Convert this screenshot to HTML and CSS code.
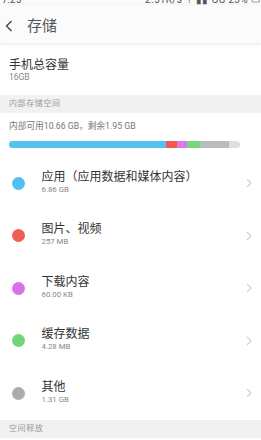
FILE: index.html
```html
<!DOCTYPE html>
<html lang="zh-CN">
<head>
<meta charset="utf-8">
<title>存储</title>
<link rel="stylesheet" href="styles.css">
</head>
<body>
<div class="status">
  <span class="time">7:25</span>
  <span class="right">2.51K/s ⇡ ▮▮ GG 23% ▭</span>
</div>
<header class="topbar">
  <svg class="back" width="8" height="12" viewBox="0 0 8 12"><path d="M6.5 1 L1.5 6 L6.5 11" fill="none" stroke="#444" stroke-width="1.4"/></svg>
  <h1 class="page-title">存储</h1>
</header>
<section class="total">
  <div class="total-title">手机总容量</div>
  <div class="total-sub">16GB</div>
</section>
<div class="band">内部存储空间</div>
<section class="usage">
  <div class="usage-text">内部可用10.66 GB，剩余1.95 GB</div>
  <div class="bar">
    <span class="seg seg-blue" style="width:67.8%"></span>
    <span class="seg seg-red" style="width:4.8%"></span>
    <span class="seg seg-pink" style="width:4.6%"></span>
    <span class="seg seg-green" style="width:5.5%"></span>
    <span class="seg seg-gray" style="width:12.5%"></span>
  </div>
</section>
<ul class="list">
  <li class="item"><span class="dot dot-blue"></span><div class="text"><div class="item-title">应用（应用数据和媒体内容）</div><div class="item-sub">6.86 GB</div></div><svg class="chev" width="6" height="10" viewBox="0 0 6 10"><path d="M1 1 L5 5 L1 9" fill="none" stroke="#cfcfcf" stroke-width="1.1"/></svg></li>
  <li class="item"><span class="dot dot-red"></span><div class="text"><div class="item-title">图片、视频</div><div class="item-sub">257 MB</div></div><svg class="chev" width="6" height="10" viewBox="0 0 6 10"><path d="M1 1 L5 5 L1 9" fill="none" stroke="#cfcfcf" stroke-width="1.1"/></svg></li>
  <li class="item"><span class="dot dot-pink"></span><div class="text"><div class="item-title">下载内容</div><div class="item-sub">60.00 KB</div></div><svg class="chev" width="6" height="10" viewBox="0 0 6 10"><path d="M1 1 L5 5 L1 9" fill="none" stroke="#cfcfcf" stroke-width="1.1"/></svg></li>
  <li class="item"><span class="dot dot-green"></span><div class="text"><div class="item-title">缓存数据</div><div class="item-sub">4.28 MB</div></div><svg class="chev" width="6" height="10" viewBox="0 0 6 10"><path d="M1 1 L5 5 L1 9" fill="none" stroke="#cfcfcf" stroke-width="1.1"/></svg></li>
  <li class="item"><span class="dot dot-gray"></span><div class="text"><div class="item-title">其他</div><div class="item-sub">1.31 GB</div></div><svg class="chev" width="6" height="10" viewBox="0 0 6 10"><path d="M1 1 L5 5 L1 9" fill="none" stroke="#cfcfcf" stroke-width="1.1"/></svg></li>
</ul>
<div class="band">空间释放</div>
</body>
</html>
```
FILE: styles.css
```css
* { box-sizing: border-box; }
html, body { margin: 0; padding: 0; }
body {
  width: 261px;
  height: 440px;
  overflow: hidden;
  background: #ffffff;
  font-family: Roboto, "Noto Sans CJK SC", sans-serif;
  color: #333;
}
.status {
  height: 5px;
  overflow: hidden;
  display: flex;
  justify-content: space-between;
  align-items: flex-end;
  padding: 0 1px 0 2px;
  font-size: 10px;
  line-height: 10px;
  color: #555;
  background: #fbfbfb;
}
.status .right { letter-spacing: 0.3px; }
.topbar {
  position: relative;
  z-index: 1;
  height: 38px;
  display: flex;
  align-items: center;
  padding: 4px 0 0 5px;
  background: #fbfbfb;
  box-shadow: 0 1px 4px rgba(0,0,0,0.10);
}
.back { display: block; }
.page-title {
  margin: 0 0 0 14px;
  font-size: 15px;
  font-weight: 400;
  color: #555;
  line-height: 20px;
}
.total { padding: 15px 9px 12px; }
.total-title { font-size: 12px; line-height: 14px; color: #333; }
.total-sub { font-size: 8.5px; line-height: 11px; color: #888; }
.band {
  height: 18px;
  background: #f1f1f1;
  padding-left: 9px;
  font-size: 8px;
  line-height: 18px;
  color: #999;
  letter-spacing: 0.6px;
}
.usage { padding: 8px 21px 9px 9px; }
.usage-text { font-size: 8.7px; line-height: 10px; color: #777; }
.bar {
  margin-top: 10px;
  height: 7px;
  border-radius: 4px;
  overflow: hidden;
  background: #dedede;
  display: flex;
}
.seg { display: block; height: 100%; }
.seg-blue { background: #56c2f2; }
.seg-red { background: #f25a50; }
.seg-pink { background: #e075ee; }
.seg-green { background: #74d67d; }
.seg-gray { background: #b9bcbc; }
.list { list-style: none; margin: 0; padding: 0; }
.item {
  height: 52.5px;
  display: flex;
  align-items: center;
  padding: 0 9px 0 11.5px;
}
.dot { width: 13px; height: 13px; border-radius: 50%; flex: none; }
.dot-blue { background: #52c0f0; }
.dot-red { background: #f25e55; }
.dot-pink { background: #d870ea; }
.dot-green { background: #70d777; }
.dot-gray { background: #aaadae; }
.text { flex: 1; margin-left: 17px; }
.item-title { font-size: 12px; line-height: 13px; color: #333; }
.item-sub { font-size: 7.8px; line-height: 12px; color: #888; }
.chev { display: block; flex: none; }
```
